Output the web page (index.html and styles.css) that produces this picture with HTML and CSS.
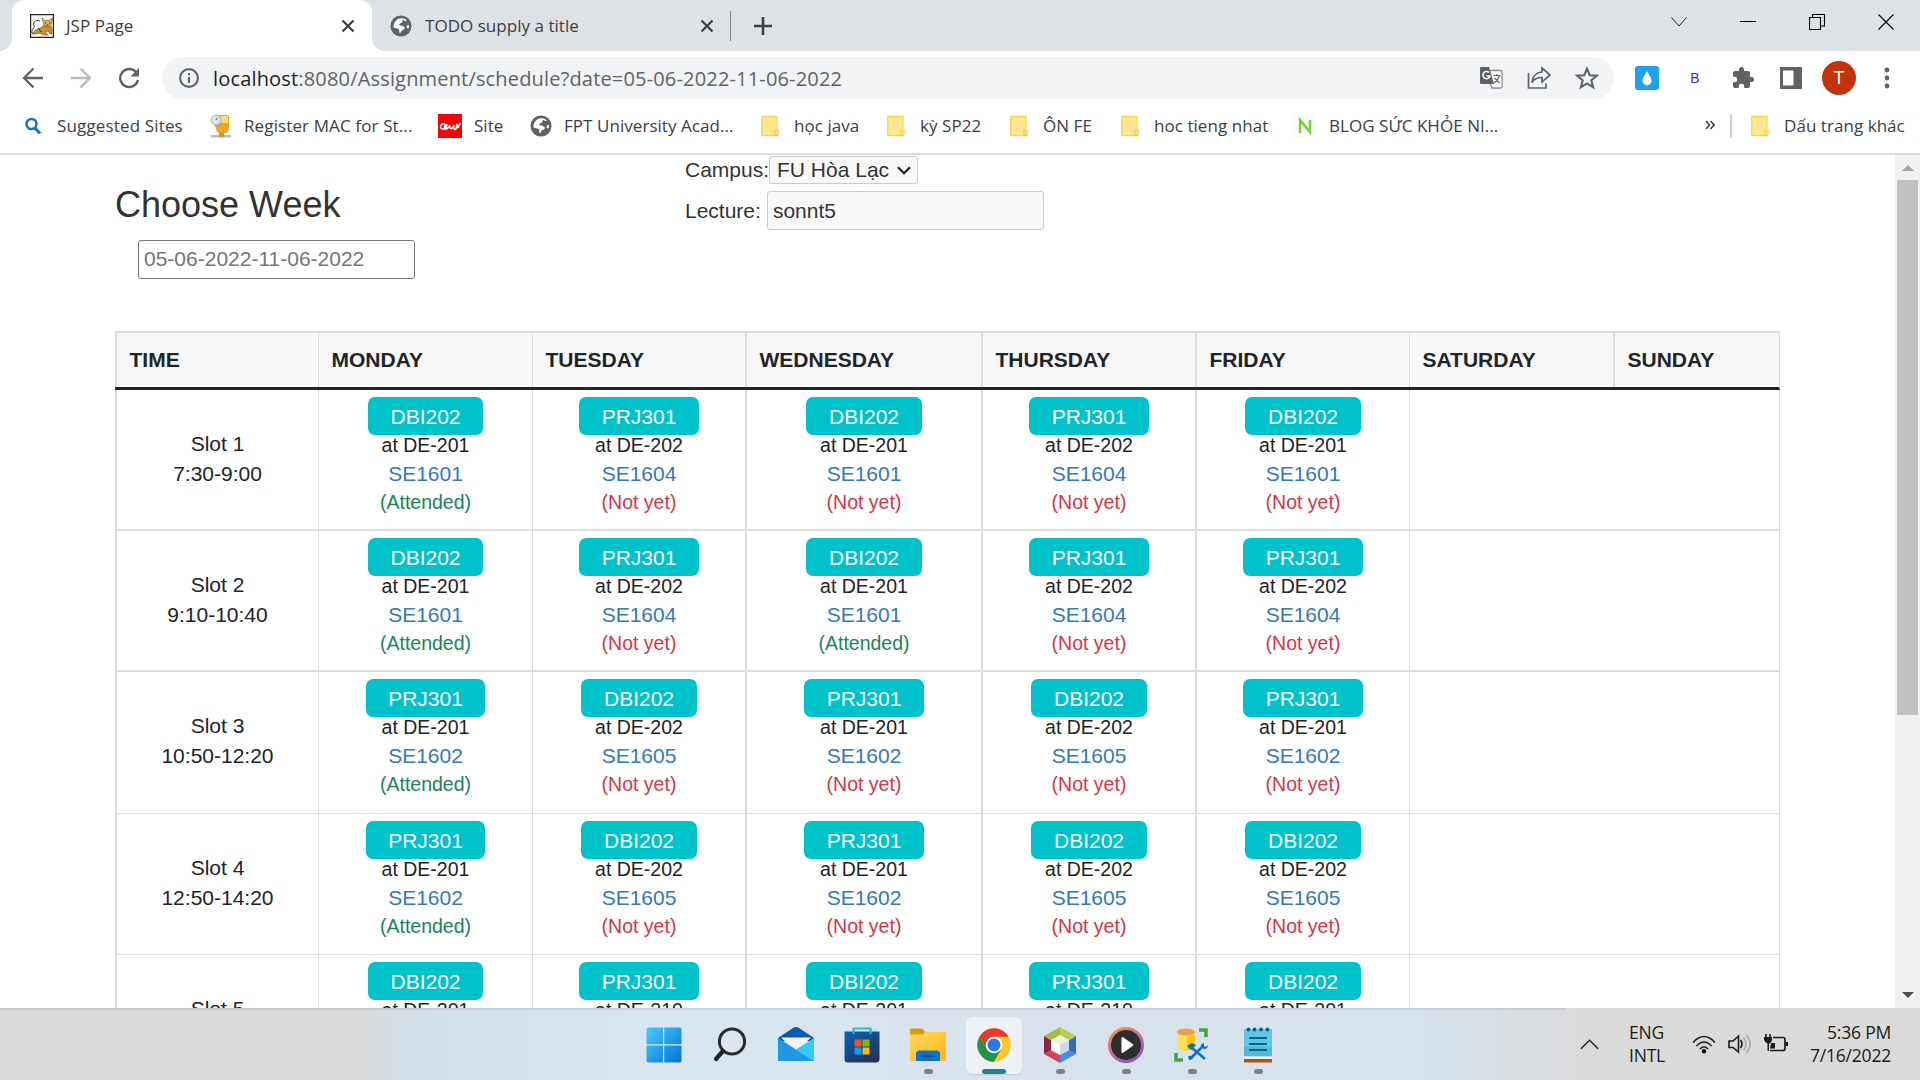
FILE: index.html
```html
<!DOCTYPE html>
<html lang="vi">
<head>
<meta charset="utf-8">
<title>JSP Page</title>
<link rel="stylesheet" href="styles.css">
</head>
<body>
<svg width="0" height="0" class="defs">
  <symbol id="globe" viewBox="0 0 24 24"><circle cx="12" cy="12" r="11.500" fill="#5f6368"/><path d="M13 3.500c-4 0-7 2-8.500 5.500l-1 4c2 2 4.500 1 6 2.500s-.5 3 1.500 4.500l2-3c1-1 3-1 3.500-3-2-2-3-2.500-5.500-2.500-2-1 0-2.500 1.500-3s.5-2.500 2-3c1.500-.5 1 1 2.500 1l1.500-.5c-1.500-1.700-3.500-2.500-5.500-2.500zM20.500 10.500c-2 .5-3 2-2 3.500.5.800 1 1 1.500.8.700-1.500.8-2.800.5-4.300z" fill="#fff"/></symbol>
  <symbol id="folder" viewBox="0 0 20 24"><path d="M1 2h16v20H1z" fill="#ffe68f"/><path d="M1 1.500h16.500v14M1 22.500h17.500M1 1.500v21" fill="none" stroke="#fbd44c" stroke-width="1.500"/><path d="M15.300 22.500v-5.500c0-1 3.500-1 3.500 0v5.500z" fill="#ffe28a" stroke="#f4c22f"/></symbol>
  <symbol id="close" viewBox="0 0 14 14"><path d="M1.500 1.500l11 11M12.500 1.500l-11 11" stroke="#3c4043" stroke-width="2.200"/></symbol>
</svg>

<header class="browser">
  <div class="tabstrip">
    <div class="tab active">
      <svg class="cat" viewBox="0 0 24 24"><path d="M.6.6h22.800v22.800H.6z" fill="#fff" stroke="#222" stroke-width="1.200"/><path d="M2 20c2-3 5-5 8-6 2-1 3-2 4-3l3 2 4-1c1 2 1 4 1 8h-2l-2-3-3 1 3 3h-5l-3-2-4 1H2z" fill="#c98e2e" stroke="#5d4a2c" stroke-width=".6"/><path d="M12 4l3 2.500h4L22.500 4l-.8 6-3.500 3.500L14 11.500z" fill="#e6b04a" stroke="#5d4a2c" stroke-width=".6"/><path d="M10 7C5 5 2 9 4.500 13M4.500 13c-2 1-3 4-2.500 6M8 14l3 4" fill="none" stroke="#333"/><path d="M15 9h1.200M19 9h1.200M16.500 11h2" stroke="#222"/></svg>
      <span class="tab-title">JSP Page</span>
      <svg class="x"><use href="#close"/></svg>
    </div>
    <div class="tab idle">
      <svg class="globe"><use href="#globe"/></svg>
      <span class="tab-title">TODO supply a title</span>
      <svg class="x"><use href="#close"/></svg>
    </div>
    <svg class="plus" viewBox="0 0 18 18"><path d="M9 0v18M0 9h18" stroke="#3c4043" stroke-width="2.600"/></svg>
    <div class="window-controls">
      <svg viewBox="0 0 16 16"><path d="M.5 3.500L8 12l7.500-8.500" fill="none" stroke="#222"/></svg>
      <svg viewBox="0 0 16 16"><path d="M0 7.500h16" stroke="#000"/></svg>
      <svg viewBox="0 0 16 16"><path d="M.5 3.500h11v12H.5zM3.500 3.500v-3h12v11.500h-4" fill="none" stroke="#000" stroke-width="1.100"/></svg>
      <svg viewBox="0 0 16 16"><path d="M.5.500l15 15M15.500.500l-15 15" stroke="#000" stroke-width="1.100"/></svg>
    </div>
  </div>

  <div class="toolbar">
    <div class="nav">
      <svg viewBox="0 0 22 22"><path d="M21 11H2.500M11.500 1.500L2 11l9.500 9.500" fill="none" stroke="#5f6368" stroke-width="2.300"/></svg>
      <svg viewBox="0 0 22 22"><path d="M1 11h18.500M10.500 1.500L20 11l-9.500 9.500" fill="none" stroke="#babcbe" stroke-width="2.300"/></svg>
      <svg viewBox="0 0 22 22"><path d="M18.300 5.500A9 9 0 1 0 20 13" fill="none" stroke="#5f6368" stroke-width="2.400"/><path d="M21 1v8.500h-8.500z" fill="#5f6368"/></svg>
    </div>
    <div class="omnibox">
      <svg class="info" viewBox="0 0 20 20"><circle cx="10" cy="10" r="8.900" fill="none" stroke="#5f6368" stroke-width="2.100"/><path d="M10 9v6M10 5v2.200" stroke="#5f6368" stroke-width="2.100"/></svg>
      <span class="url"><b>localhost</b>:8080/Assignment/schedule?date=05-06-2022-11-06-2022</span>
      <div class="page-actions">
        <svg viewBox="0 0 24 24"><path d="M11 4.500h10.500q1.500 0 1.500 1.500v14.500q0 1.500-1.500 1.500H13l-2-5" fill="#fff" stroke="#8d9093" stroke-width="1.300"/><path d="M2 1h8l5 17H2.500Q1 18 1 16.500V2.500Q1 1 2 1z" fill="#5f6368"/><path d="M10 6.500A3.600 3.600 0 1 0 11 10H7.500" fill="none" stroke="#fff" stroke-width="1.500"/><path d="M14.500 9.500h7M17.800 8v1.500M20.300 10c-1 3.500-3 5.500-5 7M15.500 12l5 5" fill="none" stroke="#5f6368" stroke-width="1.200"/></svg>
        <svg viewBox="0 0 24 24"><path d="M1.500 7v15h17.500v-4.500" fill="none" stroke="#5f6368" stroke-width="1.700"/><path d="M15 2l8 7-8 7v-4.500c-5 0-8 1.500-10 5 .5-6 4-10 10-10.500z" fill="none" stroke="#5f6368" stroke-width="1.700"/></svg>
        <svg viewBox="0 0 24 24"><path d="M12 2.600l2.700 6.600 7.100.5-5.500 4.600 1.800 7-6.100-3.900-6.100 3.900 1.800-7-5.500-4.600 7.100-.5z" fill="none" stroke="#5f6368" stroke-width="2.100"/></svg>
      </div>
    </div>
    <div class="extensions">
      <svg viewBox="0 0 24 24"><rect width="24" height="24" rx="3" fill="#1da1f2"/><path d="M12 5c2 4 4.500 6.500 4.500 9.500a4.500 5 0 0 1-9 0C7.500 11.500 10 9 12 5z" fill="#fff"/></svg>
      <span class="ext-b">B</span>
      <svg viewBox="0 0 24 24"><path d="M20.500 11H19V7a2 2 0 0 0-2-2h-4V3.500a2.500 2.500 0 0 0-5 0V5H4a2 2 0 0 0-2 2v3.800h1.500a2.700 2.700 0 0 1 0 5.400H2V20a2 2 0 0 0 2 2h3.800v-1.500a2.700 2.700 0 0 1 5.400 0V22H17a2 2 0 0 0 2-2v-4h1.500a2.500 2.500 0 0 0 0-5z" fill="#5f6368"/></svg>
      <svg viewBox="0 0 24 24"><path d="M1 1h22v22H1z" fill="#5f6368"/><path d="M4 4.500h10.500v15H4z" fill="#fff"/></svg>
      <span class="avatar">T</span>
      <svg viewBox="0 0 24 24"><g fill="#5f6368"><circle cx="12" cy="4" r="2.400"/><circle cx="12" cy="12" r="2.400"/><circle cx="12" cy="20" r="2.400"/></g></svg>
    </div>
  </div>

  <nav class="bookmarks">
    <span class="bm b1"><svg viewBox="0 0 22 24"><circle cx="9.500" cy="10" r="5" fill="none" stroke="#1a73c8" stroke-width="2.600"/><path d="M13 14l5 5.500" stroke="#1a73c8" stroke-width="3.200"/></svg>Suggested Sites</span>
    <span class="bm b2"><svg viewBox="0 0 22 24"><path d="M4 1h13q2 0 2 2v10q0 5-3 6H9q-3-1-3-5L3 9z" fill="#e9a62f"/><path d="M11 2h7v7h-7z" fill="#ffd878"/><circle cx="6" cy="6" r="5" fill="#d9e4ea" stroke="#aab9c0"/><path d="M6 6l2-2.500" stroke="#678"/><path d="M1 21h20v2.500H1z" fill="#b9bcbc"/><path d="M9 19h5v4H9z" fill="#d29425"/></svg>Register MAC for St...</span>
    <span class="bm b3"><svg viewBox="0 0 24 24"><path d="M0 0h24v24H0z" fill="#ee0909"/><path d="M7 10c-5-1-6 5-2 5 2 0 3-1 4-4-2-2-4 4-1 4 2 0 3-2 4-4-1 5 2 5 4 0-1 5 1 5 2 4l1-5 1 4q1-4 3-5" fill="none" stroke="#fff" stroke-width="1.500"/></svg>Site</span>
    <span class="bm b4"><svg><use href="#globe"/></svg>FPT University Acad...</span>
    <span class="bm b5"><svg><use href="#folder"/></svg>học java</span>
    <span class="bm b6"><svg><use href="#folder"/></svg>kỳ SP22</span>
    <span class="bm b7"><svg><use href="#folder"/></svg>ÔN FE</span>
    <span class="bm b8"><svg><use href="#folder"/></svg>hoc tieng nhat</span>
    <span class="bm b9"><svg viewBox="0 0 24 24"><path d="M0 0h24v24H0z" fill="#fbfcfa"/><path d="M7 19V6l10 12V6" fill="none" stroke="#78cf3c" stroke-width="2.500"/></svg>BLOG SỨC KHỎE NI...</span>
    <span class="more"><svg viewBox="0 0 10 10"><path d="M1 1l3.500 4L1 9M5.500 1L9 5 5.500 9" fill="none" stroke="#44474a" stroke-width="1.700"/></svg></span>
    <span class="bm b10"><svg><use href="#folder"/></svg>Dấu trang khác</span>
  </nav>
</header>

<div class="viewport">
  <main class="page">
    <section class="filters">
      <div class="week">
        <h3>Choose Week</h3>
        <div class="field date">05-06-2022-11-06-2022</div>
      </div>
      <div class="who">
        <div class="line campus">Campus:<span class="select">FU Hòa Lạc<svg viewBox="0 0 14 9"><path d="M1 1.200l6 6 6-6" fill="none" stroke="#222" stroke-width="2.200"/></svg></span></div>
        <div class="line lecture">Lecture:<span class="field">sonnt5</span></div>
      </div>
    </section>

    <section class="schedule">
      <div class="row head"><div>TIME</div><div>MONDAY</div><div>TUESDAY</div><div>WEDNESDAY</div><div>THURSDAY</div><div>FRIDAY</div><div>SATURDAY</div><div>SUNDAY</div></div>
      <div class="row thick">
        <div class="slot">Slot 1<br>7:30-9:00</div>
        <div class="class"><a class="btn">DBI202</a><p>at DE-201</p><a>SE1601</a><em class="ok">(Attended)</em></div>
        <div class="class"><a class="btn">PRJ301</a><p>at DE-202</p><a>SE1604</a><em>(Not yet)</em></div>
        <div class="class"><a class="btn">DBI202</a><p>at DE-201</p><a>SE1601</a><em>(Not yet)</em></div>
        <div class="class"><a class="btn">PRJ301</a><p>at DE-202</p><a>SE1604</a><em>(Not yet)</em></div>
        <div class="class"><a class="btn">DBI202</a><p>at DE-201</p><a>SE1601</a><em>(Not yet)</em></div>
        <div class="free"></div>
      </div>
      <div class="row thick">
        <div class="slot">Slot 2<br>9:10-10:40</div>
        <div class="class"><a class="btn">DBI202</a><p>at DE-201</p><a>SE1601</a><em class="ok">(Attended)</em></div>
        <div class="class"><a class="btn">PRJ301</a><p>at DE-202</p><a>SE1604</a><em>(Not yet)</em></div>
        <div class="class"><a class="btn">DBI202</a><p>at DE-201</p><a>SE1601</a><em class="ok">(Attended)</em></div>
        <div class="class"><a class="btn">PRJ301</a><p>at DE-202</p><a>SE1604</a><em>(Not yet)</em></div>
        <div class="class"><a class="btn">PRJ301</a><p>at DE-202</p><a>SE1604</a><em>(Not yet)</em></div>
        <div class="free"></div>
      </div>
      <div class="row">
        <div class="slot">Slot 3<br>10:50-12:20</div>
        <div class="class"><a class="btn">PRJ301</a><p>at DE-201</p><a>SE1602</a><em class="ok">(Attended)</em></div>
        <div class="class"><a class="btn">DBI202</a><p>at DE-202</p><a>SE1605</a><em>(Not yet)</em></div>
        <div class="class"><a class="btn">PRJ301</a><p>at DE-201</p><a>SE1602</a><em>(Not yet)</em></div>
        <div class="class"><a class="btn">DBI202</a><p>at DE-202</p><a>SE1605</a><em>(Not yet)</em></div>
        <div class="class"><a class="btn">PRJ301</a><p>at DE-201</p><a>SE1602</a><em>(Not yet)</em></div>
        <div class="free"></div>
      </div>
      <div class="row">
        <div class="slot">Slot 4<br>12:50-14:20</div>
        <div class="class"><a class="btn">PRJ301</a><p>at DE-201</p><a>SE1602</a><em class="ok">(Attended)</em></div>
        <div class="class"><a class="btn">DBI202</a><p>at DE-202</p><a>SE1605</a><em>(Not yet)</em></div>
        <div class="class"><a class="btn">PRJ301</a><p>at DE-201</p><a>SE1602</a><em>(Not yet)</em></div>
        <div class="class"><a class="btn">DBI202</a><p>at DE-202</p><a>SE1605</a><em>(Not yet)</em></div>
        <div class="class"><a class="btn">DBI202</a><p>at DE-202</p><a>SE1605</a><em>(Not yet)</em></div>
        <div class="free"></div>
      </div>
      <div class="row">
        <div class="slot">Slot 5</div>
        <div class="class"><a class="btn">DBI202</a><p>at DE-201</p></div>
        <div class="class"><a class="btn">PRJ301</a><p>at DE-210</p></div>
        <div class="class"><a class="btn">DBI202</a><p>at DE-201</p></div>
        <div class="class"><a class="btn">PRJ301</a><p>at DE-210</p></div>
        <div class="class"><a class="btn">DBI202</a><p>at DE-201</p></div>
        <div class="free"></div>
      </div>
    </section>
  </main>
  <aside class="scrollbar">
    <svg viewBox="0 0 12 6"><path d="M0 6l6-6 6 6z" fill="#a3a3a3"/></svg>
    <div class="thumb"></div>
    <svg viewBox="0 0 12 6"><path d="M0 0h12L6 6z" fill="#505050"/></svg>
  </aside>
</div>

<footer class="taskbar">
  <div class="apps">
    <span class="app"><svg viewBox="0 0 36 36"><defs><linearGradient id="w" x2="1" y2="1"><stop stop-color="#4cc9fb"/><stop offset="1" stop-color="#0273d2"/></linearGradient></defs><path d="M.5 2.500q0-2 2-2h14.500v16.700H.5zM18.200.500h15.300q2 0 2 2v14.700H18.200zM.5 18.400h16.500v17.100H2.500q-2 0-2-2zM18.200 18.400h17.300v15.100q0 2-2 2H18.200z" fill="url(#w)"/></svg></span>
    <span class="app"><svg viewBox="0 0 36 36"><circle cx="20" cy="14.500" r="12.600" fill="#dde6ee" stroke="#2b2b2b" stroke-width="3"/><path d="M11 24l-7 8" stroke="#222" stroke-width="4.200" stroke-linecap="round"/></svg></span>
    <span class="app"><svg viewBox="0 0 36 36"><path d="M0 11L15 1q3-2 6 0l15 10v3H0z" fill="#0b5cab"/><path d="M3 10.500h30L18 24z" fill="#f3f1f1"/><path d="M36 11L18 22.500 36 34z" fill="#37c9f6"/><path d="M0 34h36L18 22.500 0 11z" fill="#1c98e4"/></svg></span>
    <span class="app"><svg viewBox="0 0 36 36"><defs><linearGradient id="s" x2="0.600" y2="1"><stop stop-color="#0566b8"/><stop offset="1" stop-color="#24345e"/></linearGradient></defs><path d="M.5 4.500h35V32q0 3.500-3.500 3.500H4Q.5 35.500.5 32z" fill="url(#s)"/><path d="M9.500 7V1.500h17V7" fill="none" stroke="#29b8ee" stroke-width="2"/><path d="M10.500 12.500h7v7h-7z" fill="#f25022"/><path d="M18.500 12.500h7v7h-7z" fill="#7fba00"/><path d="M10.500 20.500h7v7h-7z" fill="#00a4ef"/><path d="M18.500 20.500h7v7h-7z" fill="#ffb900"/></svg></span>
    <span class="app open"><svg viewBox="0 0 36 36"><defs><linearGradient id="f" x2="1" y2="1"><stop stop-color="#ffd75e"/><stop offset="1" stop-color="#f9b817"/></linearGradient></defs><path d="M0 3q0-1.500 1.500-1.500H12l3 3-2.500 6H0z" fill="#dd9c09"/><path d="M0 7.500h12.500l3-2.500H36v29H0z" fill="url(#f)"/><path d="M6 34v-7q0-3.500 3.500-3.500h17q3.500 0 3.500 3.500v7z" fill="#0d75c8"/><path d="M11 29h14" stroke="#07427f" stroke-width="1.600"/></svg></span>
    <span class="app open focus"><svg viewBox="0 0 36 36"><circle cx="18" cy="18" r="16.700" fill="#ffc629"/><path d="M3.540 9.650a16.700 16.700 0 0 1 28.920 0H18L10.700 22.200z" fill="#e33b2e"/><path d="M3.540 9.650a16.700 16.700 0 0 0 14.460 25.050l7.200-12.500H10.800z" fill="#1e9447"/><circle cx="18" cy="18" r="8.300" fill="#fff"/><circle cx="18" cy="18" r="6.500" fill="#2a78e4"/></svg></span>
    <span class="app open"><svg viewBox="0 0 36 36"><path d="M2 9L18 0v9L9 14z" fill="#a4bd43"/><path d="M18 0l16 9-7 5-9-5z" fill="#b9d04f"/><path d="M2 9l7 4.500v10L2 27z" fill="#8b2545"/><path d="M2 27l7-4 9 5v8z" fill="#d63f61"/><path d="M34 9l-7 4.500v10l7 3.500z" fill="#316dbb"/><path d="M34 27l-7-4-9 5v8z" fill="#4790df"/><path d="M18 8l9 5-9 5-9-5z" fill="#edf4d9"/><path d="M9 13l9 5v10l-9-5z" fill="#fff"/><path d="M27 13l-9 5v10l9-5z" fill="#cfd9e4"/></svg></span>
    <span class="app open"><svg viewBox="0 0 36 36"><defs><linearGradient id="m" x2=".6" y2="1"><stop stop-color="#ff9148"/><stop offset="1" stop-color="#8c58c2"/></linearGradient></defs><circle cx="18" cy="18" r="16.500" fill="#2e2e2e" stroke="url(#m)" stroke-width="3"/><path d="M13.500 11v14q0 1.500 1.500.8l10-7q1-.8 0-1.600l-10-7q-1.500-.7-1.500.8z" fill="#fff"/></svg></span>
    <span class="app open"><svg viewBox="0 0 36 36"><path d="M3 5v16c0 4 18 4 18 0V5z" fill="#ffe05a"/><path d="M13 8h8v13q-2 2-8 2z" fill="#fcc60c"/><ellipse cx="12" cy="5" rx="9" ry="3.500" fill="#eaa24a"/><path d="M25 3h7v7M2 26v7h7" fill="none" stroke="#47a547" stroke-width="3.600"/><path d="M17 31l12-12M17 20l14 12" stroke="#0873cb" stroke-width="2.600"/><path d="M13 19l5-3 4 2-5 5zM27 20q-1-3 3-4v3l2 1 2-2q0 4-4 4zM14 29q4-1 5 1 0 3-4 3z" fill="#0873cb"/></svg></span>
    <span class="app open"><svg viewBox="0 0 36 36"><path d="M4 2h28v27H4z" fill="#5fc6e8"/><path d="M4 20h28v9.500H4z" fill="#52b9dc"/><path d="M4 29.500h28V32H4z" fill="#efefef"/><path d="M4 32h28v3.500H4z" fill="#b75008"/><path d="M9 11h18M9 17h18M9 23h18" stroke="#0c6585" stroke-width="1.900"/><g fill="#0e5f7c"><circle cx="8.500" cy="2.500" r="1.900"/><circle cx="14.500" cy="2.500" r="1.900"/><circle cx="21" cy="2.500" r="1.900"/><circle cx="27.500" cy="2.500" r="1.900"/></g></svg></span>
  </div>
  <div class="tray">
    <svg class="up" viewBox="0 0 20 11"><path d="M1 10l9-9 9 9" fill="none" stroke="#222" stroke-width="1.500"/></svg>
    <div class="lang">ENG<br>INTL</div>
    <svg class="sys" viewBox="0 0 24 20"><g fill="none" stroke="#1a1a1a" stroke-width="1.600"><path d="M1 8.500q11-12 22 0M4.500 12q7.500-8 15 0M8 15q4-4.500 8 0"/></g><circle cx="12" cy="17.300" r="2.200" fill="#111"/></svg>
    <svg class="sys" viewBox="0 0 24 20"><path d="M1 7h4l5.500-5v16L5 13.500H1z" fill="none" stroke="#1a1a1a" stroke-width="1.600"/><path d="M12.500 6q3 4 0 8" fill="none" stroke="#1a1a1a" stroke-width="1.600"/><path d="M15.500 3.500q5 6.500 0 13M18.500 1q7.500 9 0 18" fill="none" stroke="#aaa" stroke-width="1.500"/></svg>
    <svg class="sys" viewBox="0 0 24 20"><path d="M9 3.500h10q2 0 2 2v9q0 2-2 2H6" fill="none" stroke="#1a1a1a" stroke-width="1.700"/><path d="M21.500 8H24v4h-2.500zM7 9h4v5.500H6zM0 3h8v3q-1 3.500-3 3.500v7.500H3.500V9.500Q1 9 0 6zM1.200 0h1.600v4H1.200zM5.200 0h1.600v4H5.200z" fill="#1a1a1a"/></svg>
    <div class="clock">5:36 PM<br>7/16/2022</div>
  </div>
</footer>
</body>
</html>
```

FILE: styles.css
```css
* { box-sizing: border-box; }
body {
  margin: 0;
  width: 1920px;
  height: 1080px;
  overflow: hidden;
  display: flex;
  flex-direction: column;
  background: #fff;
  font-family: "Liberation Sans", Arial, sans-serif;
}
svg { display: block; flex: none; }
.defs { position: absolute; }

/* Browser chrome */
.browser {
  height: 155px;
  flex: none;
  border-bottom: 2px solid #dadce0;
  font-family: "Open Sans", "Noto Sans", sans-serif;
  color: #3c4043;
}
.tabstrip { height: 51px; background: #dee1e6; display: flex; align-items: center; padding-left: 12px; }
.tab { height: 51px; display: flex; align-items: center; font-size: 17px; letter-spacing: .03px; }
.tab-title { flex: 1; }
.tab .x { width: 14px; height: 14px; }
.active {
  position: relative;
  width: 360px;
  background: #fff;
  border-radius: 12px 12px 0 0;
  padding: 0 17px 0 18px;
}
.active::before, .active::after {
  content: "";
  position: absolute;
  bottom: 0;
  width: 12px;
  height: 12px;
}
.active::before { left: -12px; background: radial-gradient(circle at 0 0, transparent 11.500px, #fff 12px); }
.active::after { right: -12px; background: radial-gradient(circle at 100% 0, transparent 11.500px, #fff 12px); }
.cat { width: 24px; height: 24px; margin-right: 12px; }
.idle {
  width: 359px;
  padding: 0 17px 0 18px;
  background: linear-gradient(#80868b, #80868b) right center / 1.500px 30px no-repeat;
}
.idle .globe { width: 22px; height: 22px; margin-right: 13px; }
.plus { width: 18px; height: 18px; margin-left: 23px; }
.window-controls { margin-left: auto; display: flex; gap: 53px; padding-right: 26px; margin-top: -8px; }
.window-controls svg { width: 16px; height: 16px; }

.toolbar { height: 54px; display: flex; align-items: center; padding-left: 22px; }
.nav { display: flex; gap: 26px; width: 140px; }
.nav svg { width: 22px; height: 22px; }
.omnibox {
  width: 1452px;
  height: 42px;
  border-radius: 21px;
  background: #f1f3f4;
  display: flex;
  align-items: center;
  padding: 0 15px 0 17px;
}
.info { width: 20px; height: 20px; margin-right: 14px; }
.url { font-size: 20px; letter-spacing: .17px; color: #5f6368; flex: 1; }
.url b { font-weight: 400; color: #202124; }
.page-actions { display: flex; gap: 24px; }
.page-actions svg, .extensions svg { width: 24px; height: 24px; }
.extensions { display: flex; align-items: center; margin-left: 21px; gap: 24px; }
.ext-b { width: 24px; text-align: center; color: #3a35b8; font: 14px "Liberation Sans", sans-serif; }
.avatar {
  width: 34px;
  height: 34px;
  margin: 0 -5px;
  border-radius: 50%;
  background: #c2330b;
  color: #fff;
  font: 19px/34px Roboto, sans-serif;
  text-align: center;
}

.bookmarks { display: flex; height: 42px; align-items: center; font-size: 17px; line-height: 24px; letter-spacing: .05px; }
.bm { display: flex; align-items: center; white-space: nowrap; flex: none; height: 24px; margin-top: -1px; }
.bm svg { width: 24px; height: 24px; margin-right: 12px; }
.b1 { width: 188px; padding-left: 22px; letter-spacing: .15px; }
.b1 svg { width: 22px; margin-right: 13px; }
.b2 { width: 228px; padding-left: 22px; letter-spacing: .12px; }
.b2 svg { width: 22px; margin-right: 12px; }
.b3 { width: 91px; padding-left: 22px; }
.b4 { width: 253px; padding-left: 23px; }
.b4 svg { width: 22px; height: 22px; }
.b5 { width: 126px; }
.b6 { width: 123px; }
.b7 { width: 111px; }
.b8 { width: 173px; }
.b9 { width: 411px; }
.b5 svg, .b6 svg, .b7 svg, .b8 svg, .b10 svg { width: 20px; height: 22px; margin-right: 14px; }
.more { width: 28px; height: 24px; padding: 6px 0 0 1px; border-right: 2px solid #cfd1d4; }
.more svg { width: 10px; height: 10px; }
.b10 { padding-left: 18px; }

/* Web page */
.viewport { height: 853px; flex: none; display: flex; overflow: hidden; }
.page { width: 1895px; padding-left: 115px; color: #333; font-size: 21px; overflow: hidden; }
.filters { display: flex; height: 176px; }
.week { width: 570px; }
.week h3 { margin: 30px 0 18px; font-size: 36px; font-weight: 400; line-height: 40px; height: 37px; }
.field {
  display: block;
  width: 277px;
  height: 39px;
  line-height: 37px;
  border: 1px solid #ccc;
  border-radius: 3px;
  background: #f8f8f8;
  padding-left: 5px;
}
.date { margin-left: 23px; line-height: 35px; border-color: #767676; background: #fff; color: #757575; }
.line { display: flex; align-items: center; }
.campus { height: 30px; }
.select {
  display: flex;
  align-items: center;
  gap: 8px;
  width: 149px;
  height: 28px;
  padding-left: 7px;
  border: 1px solid #ccc;
  border-radius: 3px;
  background: #f8f8f8;
}
.select svg { width: 14px; height: 9px; }
.lecture { margin-top: 6px; }
.lecture .field { margin-left: 6px; }

.schedule { width: 1665px; color: #212529; border-top: 2px solid #ddd; }
.row {
  display: grid;
  grid-template-columns: 203px 214px 213px 236px 214px 214px 204px 167px;
  height: 141.200px;
  border-bottom: 1px solid #ddd;
  border-right: 1px solid #ddd;
}
.thick { border-bottom-width: 2px; }
.row > div { border-left: 1px solid #ddd; }
.row > div:nth-child(1), .row > div:nth-child(4), .row > div:nth-child(5), .row > div:nth-child(6), .row > div:nth-child(8) { border-left-width: 2px; }
.head {
  height: 57px;
  line-height: 53px;
  background: #f7f7f7;
  border-bottom: 3px solid #212529;
  font-weight: 700;
}
.head > div { padding-left: 12.500px; }
.slot { text-align: center; line-height: 30px; padding-top: 39px; }
.class { display: flex; flex-direction: column; align-items: center; padding-top: 7px; line-height: 30px; }
.btn { height: 38px; line-height: 39px; padding: 0 22.500px; border-radius: 7px; background: #00c2cb; color: #fff; }
.class p { margin: -1px 0 1px; font-size: 19.500px; line-height: 22px; color: #212529; }
.class a:not(.btn) { color: #337ab7; line-height: 34px; }
.class em { margin-top: -1px; font-style: normal; font-size: 19.500px; line-height: 24px; color: #dc3545; }
.class .ok { color: #198754; }
.free { grid-column: span 2; }

.scrollbar { width: 25px; background: #f1f1f1; display: flex; flex-direction: column; align-items: center; padding: 10px 0; }
.scrollbar svg { width: 12px; height: 6px; }
.thumb { width: 21px; height: 535px; margin: 9px 0 auto; background: #c1c1c1; }

/* Taskbar */
.taskbar {
  height: 72px;
  flex: none;
  display: flex;
  justify-content: space-between;
  background:
    linear-gradient(#b9bcc080, #b9bcc080) 0 0 / 1566px 2px no-repeat,
    linear-gradient(90deg, #d9d9d9 0, #d9d9d9 18.500%, #d3dfe8 21.500%, #d8e6f0 34%, #d9e2ec 55%, #d6e2ec 74%, #dadada 83%, #dadada 100%);
}
.apps { display: flex; gap: 10px; margin: 9px 0 0 636px; }
.app { width: 56px; height: 57px; border-radius: 6px; display: flex; flex-direction: column; align-items: center; padding-top: 10px; }
.app svg { width: 36px; height: 36px; }
.open::after { content: ""; width: 9px; height: 5px; border-radius: 3px; background: #7b8187; margin-top: 6px; }
.focus { background: #eef1f6; box-shadow: 0 1px 1px #c5ccd5; }
.focus::after { width: 24px; background: #23838f; }
.tray {
  display: flex;
  align-items: center;
  padding-right: 29px;
  font: 17.500px/23px "Open Sans", "Noto Sans", sans-serif;
  color: #1a1a1a;
}
.up { width: 19px; height: 11px; margin-right: 30px; }
.lang { width: 63px; letter-spacing: -.2px; }
.sys { width: 24px; height: 20px; margin-right: 12px; }
.clock { width: 91px; text-align: right; letter-spacing: -.2px; white-space: nowrap; }
```
